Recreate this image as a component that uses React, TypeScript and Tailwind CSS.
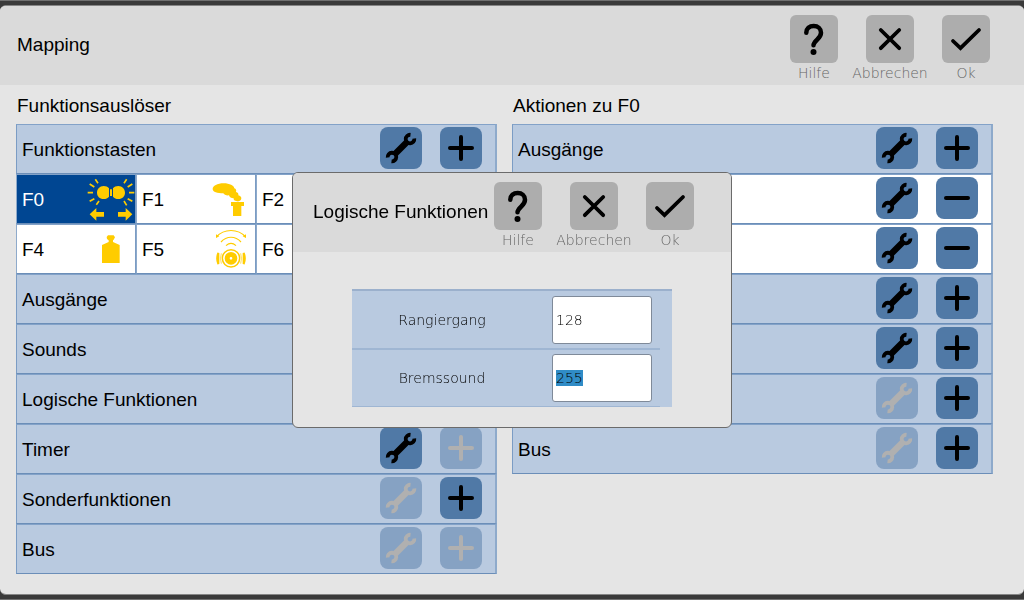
import { useEffect, useRef, type ReactNode } from "react";

const labelFont = "font-['DejaVu_Sans_Light','DejaVu_Sans',sans-serif]";

function HelpIcon() {
  return (
    <svg viewBox="0 0 48 48" className="size-12" fill="none" stroke="currentColor" strokeWidth="4.500" strokeLinecap="round" aria-hidden="true">
      <path d="M16.300 17.800C16.300 13.500 19.500 11 23.700 11c4.200 0 7.300 2.700 7.300 6.700 0 3.400-2.100 5.200-4.300 7.400C24.500 27.300 23.500 28.500 23.500 30.300" />
      <circle cx="23.500" cy="37" r="3" fill="currentColor" stroke="none" />
    </svg>
  );
}

function CancelIcon() {
  return (
    <svg viewBox="0 0 48 48" className="size-12" fill="none" stroke="currentColor" strokeWidth="3.800" strokeLinecap="round" aria-hidden="true">
      <path d="M14.800 15 33.200 33.200M33.200 15 14.800 33.200" />
    </svg>
  );
}

function OkIcon() {
  return (
    <svg viewBox="0 0 48 48" className="size-12" fill="none" stroke="currentColor" strokeWidth="3.800" strokeLinecap="round" aria-hidden="true">
      <path d="M11 26 18.500 33.200 37 15" />
    </svg>
  );
}

function WrenchIcon() {
  return (
    <svg viewBox="0 0 42 42" className="size-full" fill="none" stroke="currentColor" aria-hidden="true">
      <path d="M30.500 7.800A4.300 4.300 0 1 0 34.300 11.500M7.700 30.500A4.300 4.300 0 1 1 11.500 34.300" strokeWidth="3.800" />
      <path d="M14.500 27.500 27.500 14.500" strokeWidth="6.400" />
    </svg>
  );
}

function PlusIcon() {
  return (
    <svg viewBox="0 0 42 42" className="size-full" fill="none" stroke="currentColor" strokeWidth="4" strokeLinecap="round" aria-hidden="true">
      <path d="M10 21H32M21 10V32" />
    </svg>
  );
}

function MinusIcon() {
  return (
    <svg viewBox="0 0 42 42" className="size-full" fill="none" stroke="currentColor" strokeWidth="4" strokeLinecap="round" aria-hidden="true">
      <path d="M10 21H32" />
    </svg>
  );
}

function LightsIcon() {
  return (
    <svg viewBox="21 15 144 144" className="size-12" fill="currentColor" aria-hidden="true">
      <path d="M87 55V80C83 85 78 87 71 87 59 87 51 79 51 68s8-20 20-20c7 0 12 2 16 7ZM99 55V80c4 5 9 7 16 7 12 0 20-8 20-19s-8-20-20-20c-7 0-12 2-16 7ZM90 58h6v20h-6Z" />
      <path d="M29 133 49 114v12h23v14H49v12ZM157 133 137 114v12h-23v14h23v12Z" />
      <path d="M46 28 54 40M29 42 43 51M23 68H39M29 94 43 86M49 104 57 93M140 28 132 40M157 42 143 51M163 68H147M157 94 143 86M140 106 132 93" fill="none" stroke="currentColor" strokeWidth="5" />
    </svg>
  );
}

function SmokeIcon() {
  return (
    <svg viewBox="381 15 144 144" className="size-12" fill="currentColor" aria-hidden="true">
      <path d="M398 57c0-9 14-17 33-17 18 0 31 7 32 15 5 2 7 6 5 11 6 1 8 5 7 10 6 2 9 5 9 9 0 7-6 10-13 9-8-1-11-5-10-9-7 0-13-4-14-9-8 1-15-2-17-6-18 0-32-4-32-13Z" />
      <path d="M453 96H492V108H484V138H459V108H453Z" />
    </svg>
  );
}

function WeightIcon() {
  return (
    <svg viewBox="21 165 144 144" className="size-12" fill="currentColor" aria-hidden="true">
      <path d="M84 196H101L105 202 101 209 99 211V216L119 225V279H66V225L86 216V211L81 207 80 201Z" />
    </svg>
  );
}

function HornIcon() {
  return (
    <svg viewBox="381 165 144 144" className="size-12" fill="none" stroke="currentColor" aria-hidden="true">
      <path d="M409 201C432 175 474 175 497 201M423 216C440 197 466 197 483 216M438 227C448 218 458 218 468 227" strokeWidth="3.500" />
      <path d="M408 204V193L418 199ZM498 204V193L488 199Z" fill="currentColor" stroke="none" />
      <circle cx="453" cy="265" r="26" strokeWidth="4.500" />
      <circle cx="453" cy="265" r="11.500" strokeWidth="15" />
      <path d="M415 249Q408 265 415 282ZM491 249Q498 265 491 282Z" fill="currentColor" strokeWidth="6" />
      <path d="M424 250Q419 265 424 281M482 250Q487 265 482 281" strokeWidth="2" />
    </svg>
  );
}

function HeaderActions() {
  const items: [string, ReactNode][] = [
    ["Hilfe", <HelpIcon />],
    ["Abbrechen", <CancelIcon />],
    ["Ok", <OkIcon />],
  ];
  return (
    <div className="grid grid-cols-[48px_76px_48px] gap-[14px]">
      {items.map(([label, icon]) => (
        <button key={label} type="button" className="flex flex-col items-center text-[#666666]">
          <span className="size-12 rounded-md bg-[#adadad] text-black">{icon}</span>
          <span className={`${labelFont} text-sm leading-5 font-extralight`}>{label}</span>
        </button>
      ))}
    </div>
  );
}

type Action = { kind: "wrench" | "plus" | "minus"; disabled?: boolean };

const names = { wrench: "Bearbeiten", plus: "Hinzufügen", minus: "Entfernen" };

function RowButton({ kind, disabled }: Action) {
  return (
    <button
      type="button"
      disabled={disabled}
      aria-label={names[kind]}
      className="size-[42px] rounded-lg bg-[#5079a6] text-black disabled:bg-[#86a2c3] disabled:text-[#b0b0b0]"
    >
      {kind === "wrench" ? <WrenchIcon /> : kind === "plus" ? <PlusIcon /> : <MinusIcon />}
    </button>
  );
}

function Row({ label, actions, white }: { label?: string; actions: Action[]; white?: boolean }) {
  return (
    <div
      className={`flex h-[50px] items-center justify-between border-y border-r-2 border-l border-t-[#83a2c8] border-b-[#6b8eb8] border-l-[#7b9cc4] border-r-[#8eaacb] pr-[13px] pb-[2px] pl-[5px] ${
        white ? "bg-white" : "bg-[#b9cae0]"
      }`}
    >
      <span className="pt-[3px]">{label}</span>
      <span className="flex gap-[18px]">
        {actions.map((a) => (
          <RowButton key={a.kind} {...a} />
        ))}
      </span>
    </div>
  );
}

const on = (kind: Action["kind"]): Action => ({ kind });
const off = (kind: Action["kind"]): Action => ({ kind, disabled: true });

const keys: { id: number; name?: string; icon?: ReactNode; active?: boolean }[] = [
  { id: 0, name: "F0", icon: <LightsIcon />, active: true },
  { id: 1, name: "F1", icon: <SmokeIcon /> },
  { id: 2, name: "F2" },
  { id: 3 },
  { id: 4, name: "F4", icon: <WeightIcon /> },
  { id: 5, name: "F5", icon: <HornIcon /> },
  { id: 6, name: "F6" },
  { id: 7 },
];

function FunctionKeys() {
  return (
    <div className="grid grid-cols-4 pr-px">
      {keys.map((k) => (
        <button
          key={k.id}
          type="button"
          aria-pressed={!!k.active}
          className={`flex h-[50px] items-center justify-between border border-t-[#83a2c8] border-r-[#7b9cc4] border-b-[#6b8eb8] border-l-[#8eaacb] pl-[5px] ${
            k.active ? "bg-[#004692] text-white" : "bg-white"
          }`}
        >
          <span className="pt-px">{k.name}</span>
          <span className="text-[#ffcc00]">{k.icon}</span>
        </button>
      ))}
    </div>
  );
}

function Field({ id, label, value, selected }: { id: string; label: string; value: string; selected?: boolean }) {
  const ref = useRef<HTMLInputElement>(null);
  useEffect(() => {
    if (selected) {
      ref.current?.focus();
      ref.current?.select();
    }
  }, [selected]);
  return (
    <div className="flex h-[58px] items-center">
      <label htmlFor={id} className="w-[180px] text-center">
        {label}
      </label>
      <input
        ref={ref}
        id={id}
        defaultValue={value}
        className="ml-5 h-12 w-[100px] rounded-[3px] border border-[#7f8a99] bg-white px-[3px] font-extralight outline-none selection:bg-[#308cc6] selection:text-black"
      />
    </div>
  );
}

function Dialog() {
  return (
    <div className="fixed inset-0 flex items-center justify-center">
      <section
        role="dialog"
        aria-labelledby="dialog-title"
        className="w-[440px] overflow-hidden rounded-md border border-[#6b6b6b] bg-[#e5e5e5]"
      >
        <header className="flex h-[79px] items-start justify-between bg-[#dadada] pt-[9px] pr-[37px] pl-5">
          <h2 id="dialog-title" className="leading-[60px] whitespace-nowrap">
            Logische Funktionen
          </h2>
          <HeaderActions />
        </header>
        <form className={`${labelFont} mx-[59px] mt-[37px] mb-5 border-t-2 border-[#9bb0cc] bg-[#b9cae0] text-sm font-extralight`}>
          <Field id="rangiergang" label="Rangiergang" value="128" />
          <hr className="-mt-px mr-3 -mb-px border-t-2 border-[#9fb6d3]" />
          <Field id="bremssound" label="Bremssound" value="255" selected />
          <hr className="-mt-px mr-3 border-t border-[#9fb6d3]" />
        </form>
      </section>
    </div>
  );
}

export default function App() {
  return (
    <div className="flex min-h-screen flex-col border-y border-[#707070] bg-[#3a3a3a] pt-1 pb-[4px] font-['Liberation_Sans',Arial,sans-serif] text-[19px] leading-6 text-black">
      <main className="flex flex-1 flex-col overflow-hidden rounded-md border-y border-[#858585] bg-[#e5e5e5]">
        <header className="flex h-[79px] items-start justify-between bg-[#dadada] pt-[9px] pr-[34px] pl-[17px]">
          <h1 className="leading-[60px]">Mapping</h1>
          <HeaderActions />
        </header>
        <div className="flex items-start gap-[15px] pr-[31px] pl-4">
          <section className="flex-1">
            <h2 className="h-[39px] pl-px leading-[42px]">Funktionsauslöser</h2>
            <Row label="Funktionstasten" actions={[on("wrench"), on("plus")]} />
            <FunctionKeys />
            <Row label="Ausgänge" actions={[on("wrench"), on("plus")]} />
            <Row label="Sounds" actions={[on("wrench"), on("plus")]} />
            <Row label="Logische Funktionen" actions={[on("wrench"), on("plus")]} />
            <Row label="Timer" actions={[on("wrench"), off("plus")]} />
            <Row label="Sonderfunktionen" actions={[off("wrench"), on("plus")]} />
            <Row label="Bus" actions={[off("wrench"), off("plus")]} />
          </section>
          <section className="flex-1">
            <h2 className="h-[39px] pl-px leading-[42px]">Aktionen zu F0</h2>
            <Row label="Ausgänge" actions={[on("wrench"), on("plus")]} />
            <Row white actions={[on("wrench"), on("minus")]} />
            <Row white actions={[on("wrench"), on("minus")]} />
            <Row actions={[on("wrench"), on("plus")]} />
            <Row actions={[on("wrench"), on("plus")]} />
            <Row actions={[off("wrench"), on("plus")]} />
            <Row label="Bus" actions={[off("wrench"), on("plus")]} />
          </section>
        </div>
      </main>
      <Dialog />
    </div>
  );
}
